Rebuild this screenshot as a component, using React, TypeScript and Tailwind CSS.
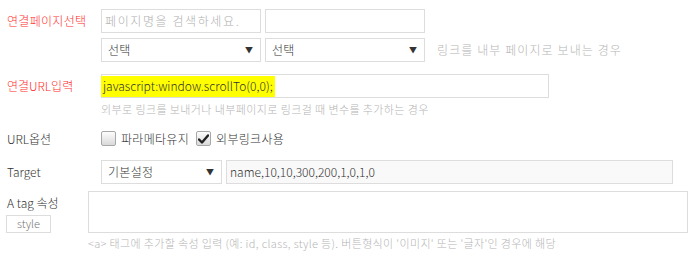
import React from 'react'

const font = { fontFamily: '"Noto Sans CJK KR", "Noto Sans", sans-serif' }

const Arrow = () => <span className="text-[8px] leading-none text-[#333]">▼</span>

const Select = ({ label, width }: { label: string; width: string }) => (
  <div className={`flex h-[24px] ${width} items-center justify-between border border-[#dddddd] bg-white pl-[6px] pr-[7px] text-[12px] text-[#333]`}>
    <span className="tracking-[0.3px]">{label}</span>
    <Arrow />
  </div>
)

const Checkbox = ({ checked }: { checked?: boolean }) => (
  <span className="flex h-[15px] w-[15px] items-center justify-center rounded-[2px] border border-[#a8a8a8] bg-gradient-to-b from-[#fdfdfd] to-[#d9d9d9]">
    {checked && (
      <svg width="11" height="10" viewBox="0 0 11 10">
        <path d="M1 5.5 L4 8.5 L10 1.5" fill="none" stroke="#222" strokeWidth="2.4" strokeLinecap="round" strokeLinejoin="round" />
      </svg>
    )}
  </span>
)

export default function App() {
  return (
    <div className="h-[257px] w-[688px] overflow-hidden bg-white pl-[7px] pt-[9px] text-[12px] font-light text-[#333]" style={font}>
      {/* 연결페이지선택 */}
      <div className="flex items-center">
        <div className="w-[94px] tracking-[0.3px] text-[#ff3030]">연결페이지선택</div>
        <div className="flex gap-[4px]">
          <div className="flex h-[24px] w-[160px] items-center border border-[#dddddd] px-[3px] tracking-[1.6px] text-[#b0b0b0]">페이지명을 검색하세요.</div>
          <div className="h-[24px] w-[160px] border border-[#dddddd]" />
        </div>
      </div>
      <div className="mt-[5px] flex items-center pl-[94px]">
        <div className="flex gap-[4px]">
          <Select label="선택" width="w-[160px]" />
          <Select label="선택" width="w-[160px]" />
        </div>
        <span className="ml-[12px] text-[12px] tracking-[1.1px] text-[#b5b5b5]">링크를 내부 페이지로 보내는 경우</span>
      </div>

      {/* 연결URL입력 */}
      <div className="mt-[12px] flex items-center">
        <div className="w-[94px] text-[#ff3030]">연결URL입력</div>
        <div className="flex h-[24px] w-[448px] items-center border border-[#dddddd]">
          <span className="-ml-[1px] flex h-[21px] items-center bg-[#ffff00] pl-[2px] pr-[2px] text-[#333]">javascript:window.scrollTo(0,0);</span>
        </div>
      </div>
      <div className="mt-[3px] pl-[94px] text-[11px] tracking-[0.4px] text-[#b5b5b5]">외부로 링크를 보내거나 내부페이지로 링크걸 때 변수를 추가하는 경우</div>

      {/* URL옵션 */}
      <div className="mt-[12px] flex items-center">
        <div className="w-[94px]">URL옵션</div>
        <label className="flex items-center gap-[5px]">
          <Checkbox />
          <span className="tracking-[0.3px]">파라메타유지</span>
        </label>
        <label className="ml-[7px] flex items-center gap-[5px]">
          <Checkbox checked />
          <span className="tracking-[0.3px]">외부링크사용</span>
        </label>
      </div>

      {/* Target */}
      <div className="mt-[12px] flex items-center">
        <div className="w-[94px]">Target</div>
        <Select label="기본설정" width="w-[121px]" />
        <div className="ml-[4px] flex h-[24px] w-[447px] items-center border border-[#dddddd] bg-[#f9f9f9] px-[3px]">name,10,10,300,200,1,0,1,0</div>
      </div>

      {/* A tag 속성 */}
      <div className="mt-[7px] flex">
        <div className="w-[94px]">
          <div className="mt-[3px]">A tag 속성</div>
          <button className="-ml-[1px] mt-[3px] flex h-[18px] w-[45px] items-center justify-center border border-[#dddddd] bg-white text-[11px] text-[#777]">style</button>
        </div>
        <div>
          <div className="h-[42px] w-[600px] border border-[#dddddd]" />
          <div className="mt-[2px] text-[11px] tracking-[0.35px] text-[#b5b5b5]">&lt;a&gt; 태그에 추가할 속성 입력 (예: id, class, style 등). 버튼형식이 '이미지' 또는 '글자'인 경우에 해당</div>
        </div>
      </div>
    </div>
  )
}
